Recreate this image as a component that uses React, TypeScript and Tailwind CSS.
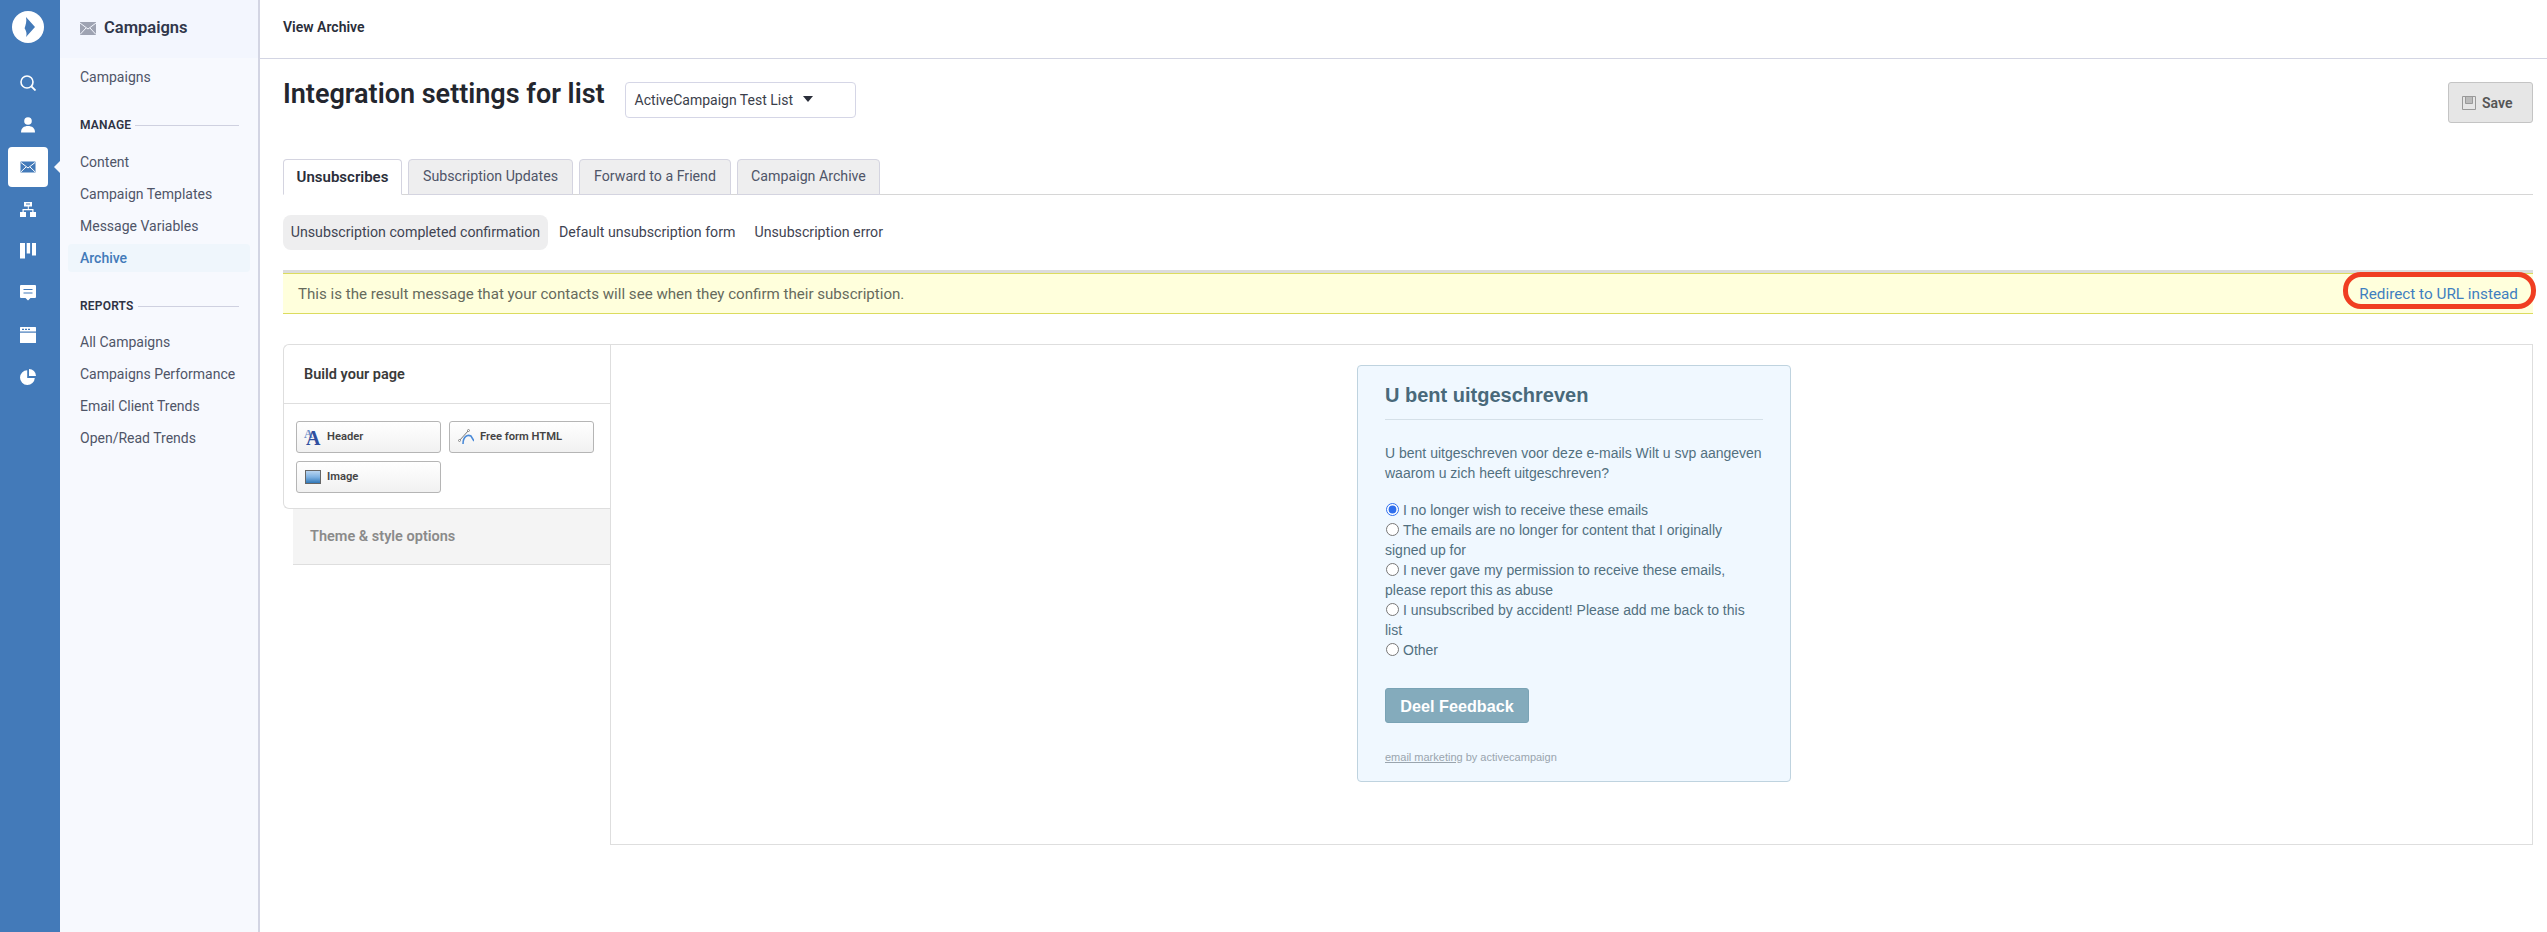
import React from "react";

const Svg = ({ children, s = 16 }: { children: React.ReactNode; s?: number }) => (
  <svg width={s} height={s} viewBox="0 0 16 16" className="block">{children}</svg>
);

const railIcons: React.ReactNode[] = [
  <Svg key="s"><circle cx="7" cy="7" r="6" fill="none" stroke="#fff" strokeWidth="1.6" /><path d="M11.5 11.5L15.5 15.5" stroke="#fff" strokeWidth="1.8" /></Svg>,
  <Svg key="p"><circle cx="8" cy="4" r="3.8" fill="#fff" /><path d="M1 15.5C1 11 4 9 8 9s7 2 7 6.5z" fill="#fff" /></Svg>,
  <Svg key="m"><rect x="0.5" y="2.5" width="15" height="11" rx="0.5" fill="#437ab9" /><path d="M1 3.5L8 9l7-5.5M1 12.8l5-4.8M15 12.8l-5-4.8" fill="none" stroke="#fff" strokeWidth="1" /></Svg>,
  <Svg key="o"><path d="M4 1h8v4.5H8.8V8H13.5v3H16v5H10v-5h2.3V9.2H3.7V11H6v5H0v-5h2.5V8h5.3V5.5H4z" fill="#fff" /><path d="M6 3h4" stroke="#437ab9" strokeWidth="1" /></Svg>,
  <Svg key="b"><rect x="0" y="0" width="5" height="15.5" fill="#fff" /><rect x="6.7" y="0" width="3.4" height="10.5" fill="#fff" /><rect x="12" y="0" width="4" height="12.5" fill="#fff" /></Svg>,
  <Svg key="c"><path d="M1 0h14a1 1 0 011 1v11a1 1 0 01-1 1h-4.5L8 15.5 5.5 13H1a1 1 0 01-1-1V1a1 1 0 011-1z" fill="#fff" /><path d="M3.5 4.5h9M3.5 8h9" stroke="#437ab9" strokeWidth="1.2" /></Svg>,
  <Svg key="w"><rect x="0" y="0" width="16" height="16" rx="0.5" fill="#fff" /><rect x="0" y="4.5" width="16" height="1.2" fill="#437ab9" /><path d="M2 2.4h2M5 2.4h2M8 2.4h2" stroke="#437ab9" strokeWidth="1.1" /></Svg>,
  <Svg key="c2"><path d="M7.2 1.2A7.4 7.4 0 1014.8 9H7.2z" fill="#fff" /><path d="M9 0a7 7 0 017 7H9z" fill="#fff" /></Svg>,
];

const Rail = () => (
  <div className="flex h-full w-[60px] shrink-0 flex-col items-center bg-[#437ab9]">
    <svg width="32" height="32" viewBox="0 0 32 32" className="mt-[11px] mb-[19px] -ml-[4px] block">
      <circle cx="16" cy="16" r="16" fill="#fff" />
      <path d="M14 6L23 16L14 26C15.5 22 13.5 19 12.6 17.2C13.6 14 15 10.5 14 6Z" fill="#437ab9" />
    </svg>
    {railIcons.map((icon, i) => (
      <div key={i} className="relative -ml-[4px] flex h-[42px] w-[40px] items-center justify-center">
        {i === 2 && <div className="absolute inset-x-0 inset-y-px rounded-[4px] bg-white" />}
        {i === 2 && <div className="absolute -right-[12px] top-[15px] h-0 w-0 border-y-[6px] border-r-[6px] border-y-transparent border-r-[#f7f9fe]" />}
        <div className="relative">{icon}</div>
      </div>
    ))}
  </div>
);

const SideLink = ({ label, active }: { label: string; active?: boolean }) => (
  <div className={`flex h-[28px] items-center rounded-[4px] pl-[12px] text-[14px] ${active ? "bg-[#eff6fc] font-medium text-[#437ab9]" : "text-[#4f5568]"}`}>
    {label}
  </div>
);

const SideHead = ({ label }: { label: string }) => (
  <div className="flex items-center gap-[4px] pl-[12px] pr-[11px] text-[12px] font-semibold tracking-[0.2px] text-[#2f3344]">
    {label}
    <div className="h-px flex-1 bg-[#cfd1e0]" />
  </div>
);

const Sidebar = () => (
  <div className="flex h-full w-[200px] shrink-0 flex-col border-r-[2px] border-[#d3d5e3] bg-[#f7f9fe]">
    <div className="flex h-[58px] items-center gap-[8px] bg-[#f3f6fe] pb-[2px] pl-[20px] text-[16.5px] font-semibold text-[#30364a]">
      <svg width="16" height="13" viewBox="0 0 16 13" className="block">
        <rect width="16" height="13" fill="#9ea3b2" />
        <path d="M0 1l8 6 8-6M0 12.5l6-6.5M16 12.5l-6-6.5" fill="none" stroke="#f3f6fe" strokeWidth="1" />
      </svg>
      Campaigns
    </div>
    <div className="flex flex-col px-[8px]">
      <div className="mt-[5px]"><SideLink label="Campaigns" /></div>
      <div className="mt-[25px]"><SideHead label="MANAGE" /></div>
      <div className="mt-[14px] flex flex-col gap-[4px]">
        <SideLink label="Content" />
        <SideLink label="Campaign Templates" />
        <SideLink label="Message Variables" />
        <SideLink label="Archive" active />
      </div>
      <div className="mt-[25px]"><SideHead label="REPORTS" /></div>
      <div className="mt-[13px] flex flex-col gap-[4px]">
        <SideLink label="All Campaigns" />
        <SideLink label="Campaigns Performance" />
        <SideLink label="Email Client Trends" />
        <SideLink label="Open/Read Trends" />
      </div>
    </div>
  </div>
);

const Tab = ({ label, active, w }: { label: string; active?: boolean; w: string }) => (
  <div className={`${w} flex h-[36px] items-center justify-center whitespace-nowrap rounded-t-[4px] border ${active ? "-mb-px border-[#d4d4e0] border-b-white bg-white text-[15px] font-semibold text-[#2a2e3a]" : "mb-0 h-[35px] border-[#d4d4e0] bg-[#eeeeef] text-[14.2px] text-[#4f5568]"}`}>
    {label}
  </div>
);

const BuildBtn = ({ icon, label }: { icon: React.ReactNode; label: string }) => (
  <div className="flex h-[32px] items-center gap-[6px] whitespace-nowrap rounded-[3px] border border-[#b5b5b5] bg-gradient-to-b from-white to-[#f1f1f1] pl-[8px] text-[11.2px] font-semibold text-[#444]">
    {icon}
    <span className="pt-[1px]">{label}</span>
  </div>
);

const Radio = ({ checked }: { checked?: boolean }) => (
  <input type="radio" readOnly checked={!!checked} className="mr-[4px] ml-px inline-block h-[13px] w-[13px] align-[-1px] accent-[#2f6fed]" />
);

const Card = () => (
  <div className="ml-[746px] mt-[20px] h-[417px] w-[434px] rounded-[4px] border border-[#bfd3df] bg-[#f0f8ff] px-[27px] font-['Liberation_Sans',sans-serif] text-[14px] leading-[20px] text-[#52707f]">
    <div className="pt-[16px] pb-[11px] border-b border-[#d5e0e8] text-[20px] font-bold leading-[26px] text-[#49697a]">U bent uitgeschreven</div>
    <p className="mt-[23px]">U bent uitgeschreven voor deze e-mails Wilt u svp aangeven waarom u zich heeft uitgeschreven?</p>
    <div className="mt-[17px]">
      <div><Radio checked />I no longer wish to receive these emails</div>
      <div><Radio />The emails are no longer for content that I originally signed up for</div>
      <div><Radio />I never gave my permission to receive these emails, please report this as abuse</div>
      <div><Radio />I unsubscribed by accident! Please add me back to this list</div>
      <div><Radio />Other</div>
    </div>
    <div className="mt-[28px] flex h-[35px] w-[144px] items-center justify-center rounded-[3px] border border-[#7aa3b5] bg-[#84abbc] pt-[1px] text-[16.2px] font-bold text-white">Deel Feedback</div>
    <div className="mt-[27px] text-[11px] leading-[14px] text-[#9aa5ae]"><span className="underline">email marketing</span> by activecampaign</div>
  </div>
);

export default function App() {
  return (
    <div className="flex h-[932px] w-[2547px] overflow-hidden bg-white font-[Roboto,sans-serif]">
      <Rail />
      <Sidebar />
      <div className="flex min-w-0 flex-1 flex-col">
        <div className="flex h-[59px] shrink-0 items-center border-b border-[#d3d5e3] pl-[23px] pb-[3px] text-[14px] font-semibold text-[#2a2e3a]">View Archive</div>
        <div className="flex flex-col pl-[23px] pr-[14px]">
          <div className="mt-[23px] flex h-[41px] items-start">
            <h1 className="whitespace-nowrap text-[27px] font-semibold leading-[24px] text-[#23262e]">Integration settings for list</h1>
            <div className="ml-[20px] flex h-[36px] w-[231px] items-center whitespace-nowrap rounded-[4px] border border-[#d5d6e6] pl-[9px] text-[14px] text-[#3a3e4a]">
              ActiveCampaign Test List
              <svg width="10" height="6" viewBox="0 0 10 6" className="ml-[10px] mb-[2px] block"><path d="M0 0h10L5 6z" fill="#2a2e3a" /></svg>
            </div>
            <div className="ml-auto flex h-[41px] w-[85px] items-center gap-[6px] rounded-[3px] border border-[#c4c4c4] bg-[#e6e6e6] pl-[13px] pt-[1px] text-[14px] font-semibold text-[#555]">
              <svg width="14" height="14" viewBox="0 0 14 14" className="block"><path d="M0.5 0.5h13v13h-13z" fill="none" stroke="#999" /><path d="M3.5 1v6.5h7V1" fill="#bbb" stroke="#999" /></svg>
              Save
            </div>
          </div>
          <div className="mt-[36px] flex h-[36px] items-start gap-[6px] border-b border-[#d6d6d6]">
            <Tab label="Unsubscribes" active w="w-[119px]" />
            <Tab label="Subscription Updates" w="w-[165px]" />
            <Tab label="Forward to a Friend" w="w-[152px]" />
            <Tab label="Campaign Archive" w="w-[143px]" />
          </div>
          <div className="mt-[20px] flex h-[35px] items-center whitespace-nowrap text-[14.2px] text-[#3f4452]">
            <div className="flex h-full w-[265px] items-center justify-center rounded-[8px] bg-[#eeeeef]">Unsubscription completed confirmation</div>
            <div className="ml-[11px]">Default unsubscription form</div>
            <div className="ml-[19px]">Unsubscription error</div>
          </div>
          <div className="relative mt-[20px] flex h-[44px] items-center justify-between border-t-[3px] border-[#dcdcdc] text-[15.1px]">
            <div className="flex h-full w-full items-center justify-between border-y border-[#dcdc5e] bg-[#ffffdc] pl-[15px] pr-[15px] pt-[2px] text-[#666a5c]">
              <span>This is the result message that your contacts will see when they confirm their subscription.</span>
              <span className="text-[15.3px] text-[#3f7fc0]">Redirect to URL instead</span>
            </div>
            <div className="absolute -right-[3px] -top-[1px] h-[37px] w-[193px] rounded-[18px] border-[5px] border-[#f03e22]" />
          </div>
          <div className="mt-[30px] flex h-[501px]">
            <div className="flex w-[327px] shrink-0 flex-col">
              <div className="h-[165px] rounded-l-[6px] border-y border-l border-[#dedede]">
                <div className="flex h-[59px] items-center border-b border-[#dedede] pl-[20px] pt-[1px] text-[14.5px] font-semibold text-[#3a3a3a]">Build your page</div>
                <div className="grid grid-cols-[145px_145px] gap-[8px] pl-[12px] pt-[17px]">
                  <BuildBtn label="Header" icon={
                    <span className="relative block h-[16px] w-[16px] font-['Liberation_Serif',serif] font-bold text-[#2f4f9f]">
                      <span className="absolute -left-[1px] -top-[4px] text-[12px] text-[#6f8fc8]">A</span>
                      <span className="absolute left-[1px] -top-[6px] text-[20px]">A</span>
                    </span>} />
                  <BuildBtn label="Free form HTML" icon={
                    <svg width="16" height="16" viewBox="0 0 16 16" className="block"><path d="M1 12L11 1" stroke="#555" strokeWidth="0.8" /><circle cx="1.5" cy="11.5" r="1" fill="#fff" stroke="#555" strokeWidth="0.6" /><circle cx="10.5" cy="1.5" r="1" fill="#fff" stroke="#555" strokeWidth="0.6" /><path d="M5 15C5 8 9 5 13 7L16 12" fill="none" stroke="#4a8ad8" strokeWidth="1.6" /></svg>} />
                  <BuildBtn label="Image" icon={
                    <span className="block h-[14px] w-[16px] border border-[#666] bg-gradient-to-b from-[#b8d4f0] via-[#7fb2e2] to-[#2f78b8]" />} />
                </div>
              </div>
              <div className="ml-[10px] flex h-[56px] items-center border-b border-[#dedede] bg-[#f4f4f4] pl-[17px] pt-[1px] text-[14.5px] font-semibold text-[#8a8a8a]">Theme &amp; style options</div>
            </div>
            <div className="flex-1 border border-[#dedede]">
              <Card />
            </div>
          </div>
        </div>
      </div>
    </div>
  );
}
